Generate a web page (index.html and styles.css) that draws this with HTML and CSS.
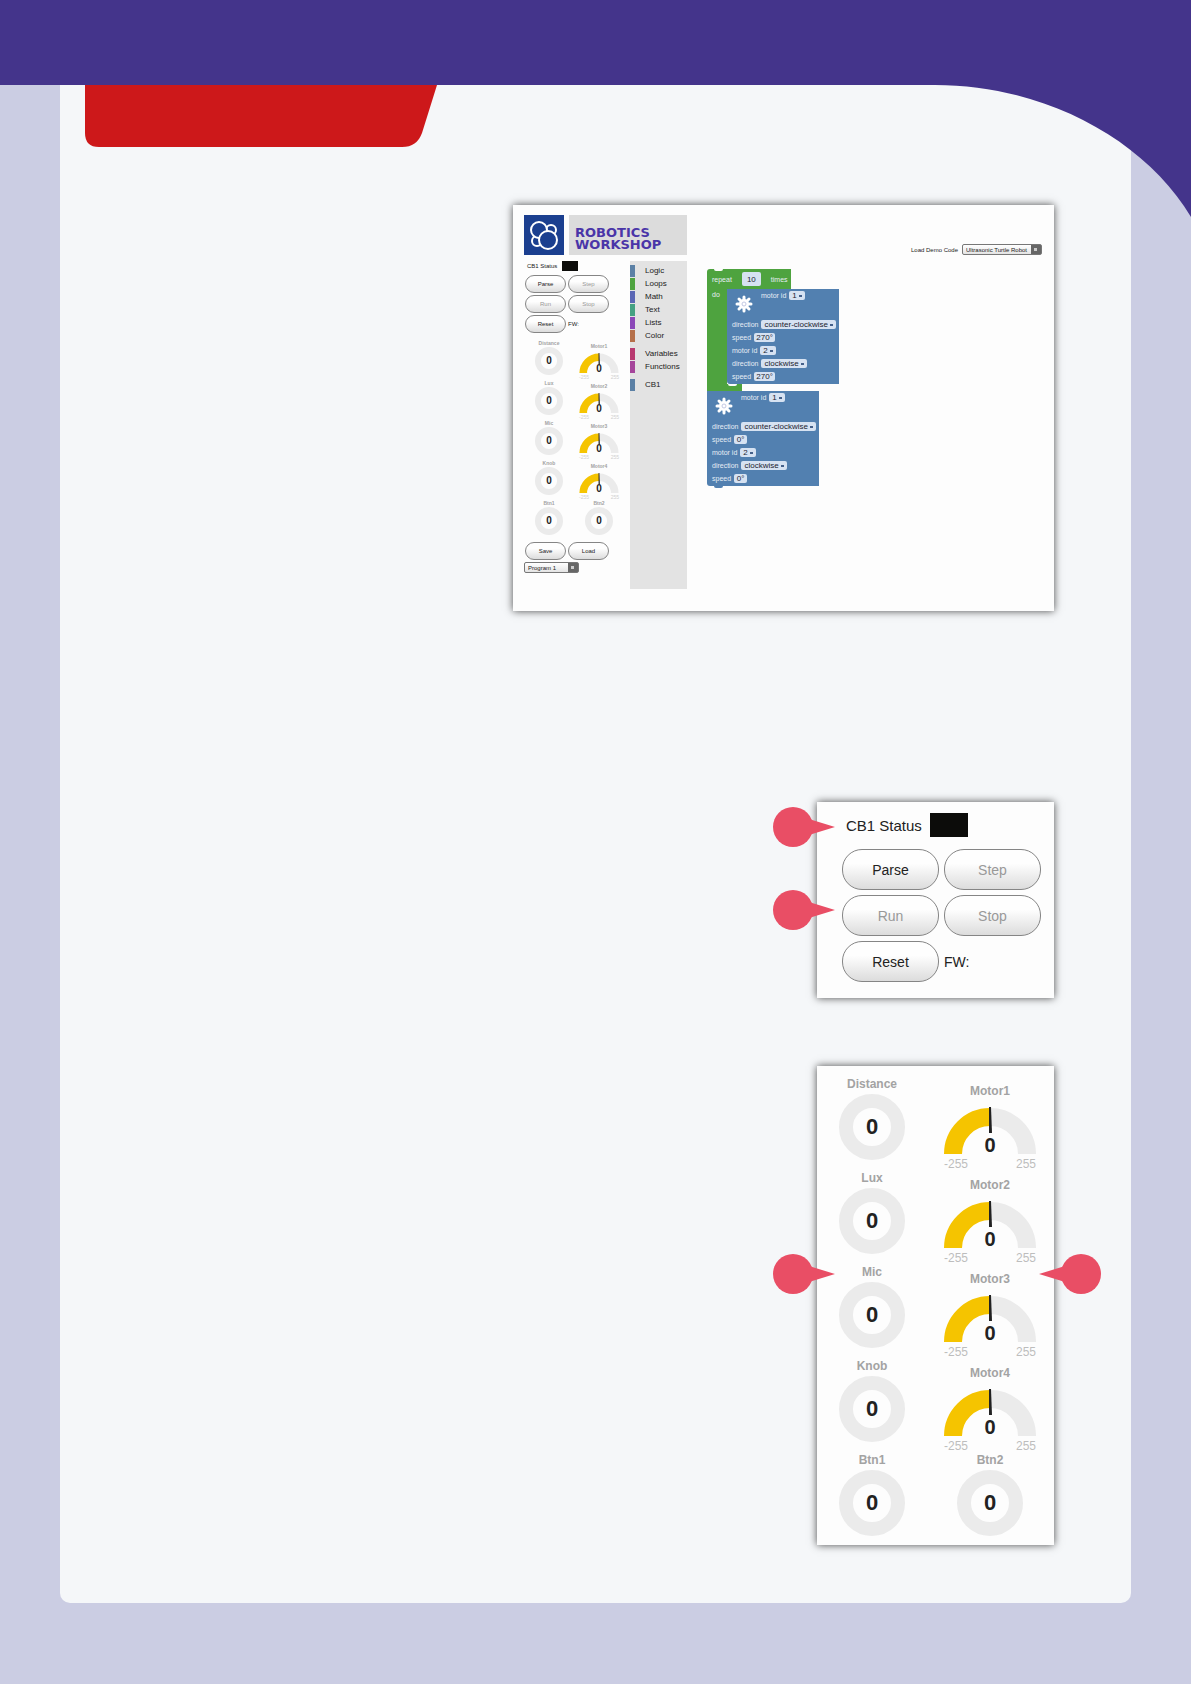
FILE: index.html
```html
<!DOCTYPE html>
<html lang="en">
<head>
    <meta charset="UTF-8">
    <meta name="viewport" content="width=device-width, initial-scale=1.0">
    <title>Robotics Workshop</title>
    <link rel="stylesheet" href="styles.css">
</head>
<body>
    <!-- shared shapes -->
    <svg class="defs" aria-hidden="true">
        <symbol id="pin" viewBox="0 0 62 40">
            <circle cx="20" cy="20" r="20"/>
            <path d="M36 12L62 20L36 28Z"/>
        </symbol>
        <symbol id="gear" viewBox="0 0 18 18">
            <g stroke="#fff" stroke-width="3" stroke-linecap="round">
                <path d="M9 2V16M2 9H16M4 4L14 14M14 4L4 14"/>
            </g>
            <circle cx="9" cy="9" r="5" fill="#fff"/>
            <circle cx="9" cy="9" r="2" fill="none" stroke="#c3c9e4"/>
        </symbol>
        <symbol id="ring" viewBox="0 0 66 66">
            <circle cx="33" cy="33" r="26" fill="none" stroke="#ebebeb" stroke-width="14"/>
        </symbol>
        <symbol id="arc" viewBox="0 0 92 47">
            <path d="M46 10A37 37 0 0 1 83 47" fill="none" stroke="#ebebeb" stroke-width="18"/>
            <path d="M9 47A37 37 0 0 1 46 10" fill="none" stroke="#f5c400" stroke-width="18"/>
            <path d="M45 0H47L48 26H45Z" fill="#222"/>
        </symbol>
    </svg>

    <header class="banner">
        <svg class="banner-curve" viewBox="0 0 256 132" aria-hidden="true">
            <path d="M0 0H256V132C210 55 110 0 0 0Z"/>
        </svg>
    </header>

    <main class="sheet">
        <svg class="tab" viewBox="0 0 352 62" aria-hidden="true">
            <path d="M0 0H352L337 48Q332 62 317 62H14Q0 62 0 48Z"/>
        </svg>

        <section class="panel app">
            <div class="app-header">
                <svg class="logo" viewBox="0 0 40 40" aria-hidden="true">
                    <rect width="40" height="40" fill="#1b3f8f"/>
                    <g fill="#1b3f8f" stroke="#fff" stroke-width="2">
                        <circle cx="27" cy="15" r="5"/>
                        <circle cx="13" cy="26" r="5"/>
                        <circle cx="15" cy="15" r="8"/>
                        <circle cx="24" cy="25" r="9"/>
                    </g>
                </svg>
                <h1 class="app-title">ROBOTICS<br>WORKSHOP</h1>
                <div class="demo">
                    <label for="demo">Load Demo Code</label>
                    <select id="demo" class="menu menu-demo">
                        <option>Ultrasonic Turtle Robot</option>
                    </select>
                </div>
            </div>

            <div class="app-body">
                <div class="side small">
                    <div class="status">CB1 Status <span class="led"></span></div>
                    <div class="controls">
                        <button>Parse</button>
                        <button disabled>Step</button>
                        <button disabled>Run</button>
                        <button disabled>Stop</button>
                        <button>Reset</button>
                        <span class="fw">FW:</span>
                    </div>
                    <div class="gauges"></div>
                    <div class="controls">
                        <button>Save</button>
                        <button>Load</button>
                    </div>
                    <select class="menu menu-program" aria-label="Program">
                        <option>Program 1</option>
                    </select>
                </div>

                <ul class="toolbox">
                    <li class="logic">Logic</li>
                    <li class="loops">Loops</li>
                    <li class="math">Math</li>
                    <li class="text">Text</li>
                    <li class="lists">Lists</li>
                    <li class="color">Color</li>
                    <li class="variables">Variables</li>
                    <li class="functions">Functions</li>
                    <li class="cb1">CB1</li>
                </ul>

                <div class="workspace">
                    <div class="loop">
                        <div class="loop-top">
                            <label for="times">repeat</label>
                            <input id="times" class="field number" value="10">
                            <span>times</span>
                        </div>
                        <div class="loop-body">
                            <div class="loop-arm">do</div>
                            <div class="block">
                                <div class="block-head">
                                    <svg class="gear"><use href="#gear"/></svg>
                                    <label for="a1">motor id</label>
                                    <select id="a1" class="field"><option>1</option></select>
                                </div>
                                <div class="row"><label for="a2">direction</label><select id="a2" class="field"><option>counter-clockwise</option></select></div>
                                <div class="row"><label for="a3">speed</label><input id="a3" class="field angle" value="270°"></div>
                                <div class="row"><label for="a4">motor id</label><select id="a4" class="field"><option>2</option></select></div>
                                <div class="row"><label for="a5">direction</label><select id="a5" class="field"><option>clockwise</option></select></div>
                                <div class="row"><label for="a6">speed</label><input id="a6" class="field angle" value="270°"></div>
                            </div>
                        </div>
                        <div class="loop-foot"></div>
                    </div>
                    <div class="block block-last">
                        <div class="block-head">
                            <svg class="gear"><use href="#gear"/></svg>
                            <label for="b1">motor id</label>
                            <select id="b1" class="field"><option>1</option></select>
                        </div>
                        <div class="row"><label for="b2">direction</label><select id="b2" class="field"><option>counter-clockwise</option></select></div>
                        <div class="row"><label for="b3">speed</label><input id="b3" class="field zero" value="0°"></div>
                        <div class="row"><label for="b4">motor id</label><select id="b4" class="field"><option>2</option></select></div>
                        <div class="row"><label for="b5">direction</label><select id="b5" class="field"><option>clockwise</option></select></div>
                        <div class="row"><label for="b6">speed</label><input id="b6" class="field zero" value="0°"></div>
                    </div>
                </div>
            </div>
        </section>

        <section class="panel control-panel">
            <svg class="pin pin-status"><use href="#pin"/></svg>
            <svg class="pin pin-run"><use href="#pin"/></svg>
            <div class="status">CB1 Status <span class="led"></span></div>
            <div class="controls">
                <button>Parse</button>
                <button disabled>Step</button>
                <button disabled>Run</button>
                <button disabled>Stop</button>
                <button>Reset</button>
                <span class="fw">FW:</span>
            </div>
        </section>

        <section class="panel gauge-panel">
            <svg class="pin pin-sensors"><use href="#pin"/></svg>
            <svg class="pin pin-motors"><use href="#pin"/></svg>
            <div class="gauges"></div>
        </section>
    </main>
    <script src="script.js"></script>
</body>
</html>
```

FILE: styles.css
```css
* {
    box-sizing: border-box;
}
body {
    margin: 0;
    min-height: 100vh;
    background: #cbcde3;
    font-family: "Liberation Sans", Arial, sans-serif;
    color: #222;
}
.defs {
    display: none;
}
.banner {
    position: relative;
    height: 85px;
    background: #44348b;
}
.banner-curve {
    position: absolute;
    top: 100%;
    right: 0;
    width: 256px;
    height: 132px;
    fill: #44348b;
}
.sheet {
    display: flex;
    flex-direction: column;
    align-items: flex-end;
    margin: 0 60px 81px;
    padding: 0 77px 58px 25px;
    background: #f5f7f9;
    border-radius: 0 0 10px 10px;
}
.tab {
    align-self: flex-start;
    width: 352px;
    height: 62px;
    margin-bottom: 58px;
    fill: #cd181a;
}
.panel {
    position: relative;
    background: #fdfdfd;
    box-shadow: 0 0 8px rgba(0, 0, 0, 0.7);
}

/* status, buttons */
.status {
    display: flex;
    align-items: center;
    gap: 8px;
    padding-left: 4px;
    font-size: 15px;
}
.led {
    width: 38px;
    height: 24px;
    background: #0c0c0a;
}
.controls {
    display: grid;
    grid-template-columns: 97px 97px;
    grid-auto-rows: 41px;
    gap: 5px;
    align-items: center;
    font-size: 14px;
}
.controls button {
    height: 100%;
    padding: 0;
    border: 1px solid #858585;
    border-radius: 20px;
    background: linear-gradient(#fefefe 35%, #dcdcdc);
    color: #222;
    font: inherit;
}
.controls button:disabled {
    color: #999;
}
.control-panel {
    width: 237px;
    margin-bottom: 68px;
    padding: 11px 15px 16px 25px;
}
.control-panel .status {
    margin-bottom: 12px;
}

/* gauges */
.gauges {
    display: grid;
    grid-template-columns: 92px 92px;
    grid-auto-rows: 94px;
    column-gap: 26px;
    text-align: center;
}
.gauge-panel {
    width: 237px;
    padding: 11px 9px 0;
    height: 479px;
}
.gauge {
    display: flex;
    flex-direction: column;
    align-items: center;
}
.gauge-label {
    margin-bottom: 3px;
    font-size: 12px;
    font-weight: bold;
    line-height: 14px;
    color: #a3a3a3;
}
.face {
    display: grid;
    place-items: center;
}
.face svg, .value {
    grid-area: 1 / 1;
}
.face svg {
    width: 66px;
    height: 66px;
}
.value {
    font-size: 22px;
    font-weight: bold;
    line-height: 22px;
}
.motor {
    padding-top: 7px;
}
.motor .gauge-label {
    margin-bottom: 9px;
}
.motor .face svg {
    width: 92px;
    height: 47px;
}
.motor .value {
    align-self: end;
    font-size: 20px;
    line-height: 18px;
}
.ends {
    display: flex;
    justify-content: space-between;
    align-self: stretch;
    margin-top: 3px;
    font-size: 12px;
    line-height: 14px;
    color: #bdbdbd;
}
.gauge-panel .gauges {
    justify-content: start;
}

/* callouts */
.pin {
    position: absolute;
    left: -44px;
    width: 62px;
    height: 40px;
    fill: #e94e65;
}
.pin-status {
    top: 5px;
}
.pin-run {
    top: 88px;
}
.pin-sensors {
    top: 188px;
}
.pin-motors {
    top: 188px;
    left: auto;
    right: -47px;
    transform: scaleX(-1);
}

/* app window */
.app {
    width: 541px;
    margin-bottom: 191px;
    padding: 10px 12px 22px 11px;
}
.app-header {
    display: flex;
    gap: 5px;
    margin-bottom: 6px;
}
.logo {
    width: 40px;
    height: 40px;
}
.app-title {
    width: 118px;
    margin: 0;
    padding: 12px 6px 0;
    background: #dcdcdc;
    color: #4a35a8;
    font-family: "DejaVu Sans", sans-serif;
    font-size: 13px;
    line-height: 12px;
}
.demo {
    display: flex;
    align-items: center;
    align-self: flex-end;
    gap: 4px;
    margin-left: auto;
    font-size: 6px;
}
.menu {
    display: block;
    appearance: none;
    height: 11px;
    padding: 0 3px;
    border: 1px solid #777;
    border-radius: 2px;
    background:
        linear-gradient(#ccc, #ccc) right 4px center / 3px 3px no-repeat,
        linear-gradient(#666, #666) right / 10px 100% no-repeat,
        linear-gradient(#fff, #e4e4e4);
    color: #222;
    font: 6px "Liberation Sans", Arial, sans-serif;
}
.menu-demo {
    width: 80px;
}
.menu-program {
    width: 55px;
    margin-top: 2px;
}
.app-body {
    display: flex;
}
.side {
    width: 106px;
}
.small .status {
    gap: 5px;
    padding-left: 3px;
    margin-bottom: 4px;
    font-size: 6px;
}
.small .led {
    width: 16px;
    height: 10px;
}
.small .controls {
    grid-template-columns: 41px 41px;
    grid-auto-rows: 18px;
    gap: 2px;
    padding-left: 1px;
    font-size: 6px;
}
.small .controls button {
    border-radius: 9px;
}
.small .gauges {
    grid-template-columns: 40px 40px;
    grid-auto-rows: 40px;
    column-gap: 10px;
    padding: 7px 0 2px 5px;
}
.small .gauge-label {
    margin-bottom: 1px;
    font-size: 5px;
    line-height: 6px;
}
.small .face svg {
    width: 28px;
    height: 28px;
}
.small .value {
    font-size: 10px;
    line-height: 10px;
}
.small .motor {
    padding-top: 3px;
}
.small .motor .gauge-label {
    margin-bottom: 4px;
}
.small .motor .face svg {
    width: 40px;
    height: 20px;
}
.small .motor .value {
    line-height: 8px;
}
.small .ends {
    margin-top: 1px;
    font-size: 5px;
    line-height: 6px;
    color: #d0d0d0;
}

.toolbox {
    width: 57px;
    height: 328px;
    margin: 0;
    padding: 4px 0 0;
    list-style: none;
    background: #e3e3e3;
    font-size: 8px;
    line-height: 12px;
}
.toolbox li {
    margin-bottom: 1px;
    padding-left: 10px;
    border-left: 5px solid #5b80a5;
}
.toolbox .loops { border-color: #4ea340; }
.toolbox .math { border-color: #5b67b5; }
.toolbox .text { border-color: #45a183; }
.toolbox .lists { border-color: #8b48b8; }
.toolbox .color { border-color: #b5704a; }
.toolbox .variables { margin-top: 6px; border-color: #b83a70; }
.toolbox .functions { border-color: #a5459b; }
.toolbox .cb1 { margin-top: 6px; }

/* blocks */
.workspace {
    padding: 8px 0 0 20px;
    color: #e6edf5;
    font-size: 7px;
}
.loop-top {
    display: flex;
    align-items: center;
    gap: 10px;
    position: relative;
    width: 84px;
    height: 20px;
    padding-left: 5px;
    background: #4ea33f;
    border-radius: 3px 0 0;
}
.loop-top::before {
    content: "";
    position: absolute;
    top: 0;
    left: 7px;
    width: 9px;
    height: 2px;
    background: #fdfdfd;
    border-radius: 0 0 4px 4px;
}
.loop-body {
    display: flex;
}
.loop-arm {
    width: 20px;
    padding: 2px 0 0 5px;
    background: #4ea33f;
}
.loop-foot {
    width: 35px;
    height: 7px;
    background: #4ea33f;
}
.block {
    position: relative;
    width: 112px;
    padding-bottom: 1px;
    background: #5280b0;
    border-radius: 0 0 0 3px;
}
.block::after {
    content: "";
    position: absolute;
    top: 100%;
    left: 7px;
    width: 9px;
    height: 2px;
    background: #5280b0;
    border-radius: 0 0 4px 4px;
}
.loop .block::after {
    left: 1px;
    background: #fdfdfd;
}
.block-head {
    display: flex;
    align-items: flex-start;
    gap: 3px;
    height: 29px;
    padding: 2px 0 0 8px;
    line-height: 9px;
}
.gear {
    width: 18px;
    height: 18px;
    margin: 4px 5px 0 0;
}
.row {
    display: flex;
    align-items: center;
    gap: 3px;
    height: 13px;
    padding-left: 5px;
}
.field {
    appearance: none;
    height: 9px;
    padding: 0 8px 0 3px;
    border: 0;
    border-radius: 2px;
    background:
        linear-gradient(#44608a, #44608a) right 3px center / 3px 2px no-repeat,
        #d6e2f2;
    color: #1c2430;
    font: 8px/9px "Liberation Sans", Arial, sans-serif;
}
.field.number, .field.angle, .field.zero {
    padding: 0;
    background: #d6e2f2;
    text-align: center;
}
.field.number {
    width: 19px;
    height: 14px;
}
.field.angle {
    width: 21px;
}
.field.zero {
    width: 13px;
}
```

FILE: script.js
```js
const gauges = ["Distance", "Motor1", "Lux", "Motor2", "Mic", "Motor3", "Knob", "Motor4", "Btn1", "Btn2"];

function gaugeHtml(name) {
    const motor = name.startsWith("Motor");
    return `<div class="gauge ${motor ? "motor" : "sensor"}">
        <div class="gauge-label">${name}</div>
        <div class="face">
            <svg><use href="#${motor ? "arc" : "ring"}"/></svg>
            <span class="value">0</span>
        </div>
        ${motor ? '<div class="ends"><span>-255</span><span>255</span></div>' : ""}
    </div>`;
}

document.querySelectorAll(".gauges").forEach(el => {
    el.innerHTML = gauges.map(gaugeHtml).join("");
});
```
